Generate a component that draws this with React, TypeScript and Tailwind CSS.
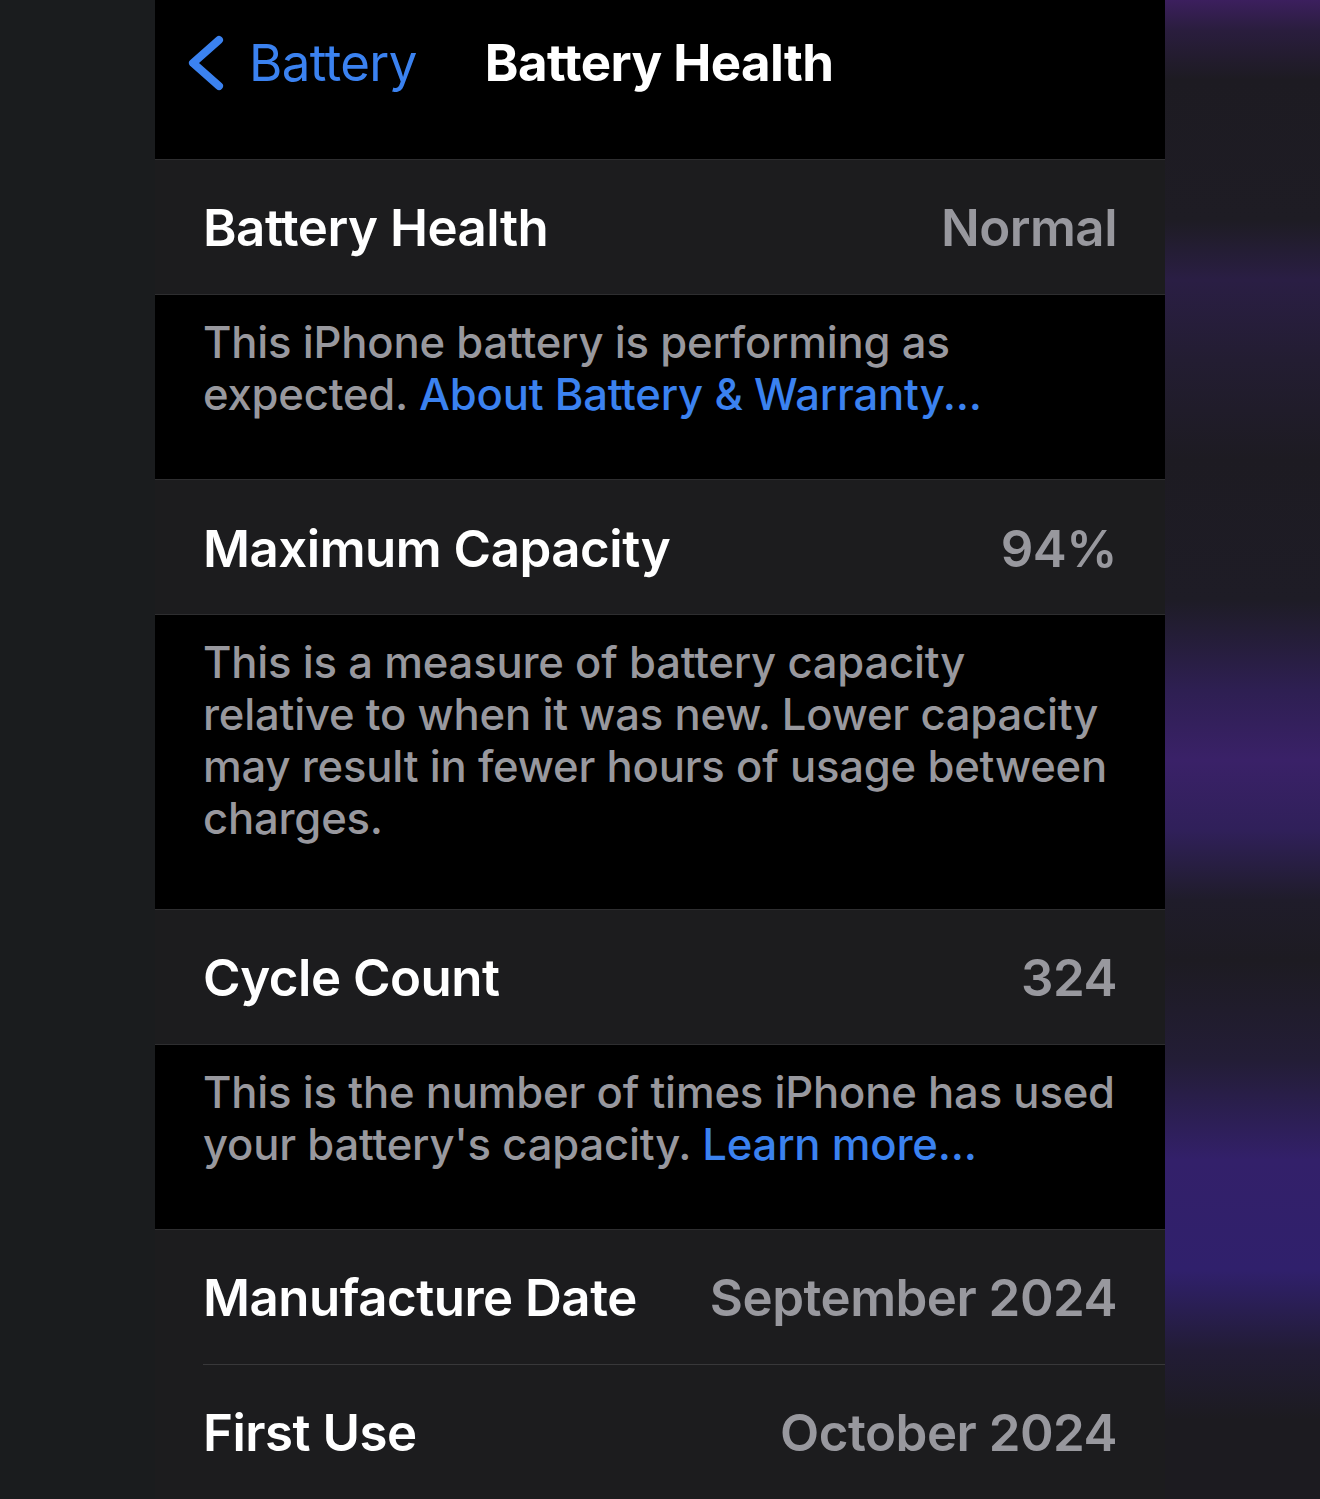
import React from 'react';

const font = { fontFamily: 'Inter, "Noto Sans", sans-serif' };

function ValueRow({ label, value, inset }: { label: string; value: string; inset?: boolean }) {
  return (
    <div className="bg-[#1c1c1e]">
      <div className="flex h-[134px] items-center justify-between px-[48px] pt-[3px]">
        <span className="text-[51px] font-semibold tracking-[-0.5px] text-white">{label}</span>
        <span className="text-[51px] font-semibold tracking-[-0.5px] text-[#98989e]">{value}</span>
      </div>
      {inset && <div className="ml-[48px] h-px bg-[#38383a]" />}
    </div>
  );
}

function Footer({ children, height }: { children: React.ReactNode; height: string }) {
  return (
    <div className={`border-y border-[#2e2e30] bg-black px-[48px] pt-[22px] ${height}`}>
      <p className="whitespace-nowrap text-[43.6px] font-medium leading-[52px] tracking-[-0.2px] text-[#98989e]">
        {children}
      </p>
    </div>
  );
}

export default function App() {
  return (
    <div className="flex h-[1499px] w-full overflow-hidden" style={font}>
      {/* left backdrop */}
      <div className="w-[155px] shrink-0 bg-[#1a1c1e]" />

      {/* phone screen */}
      <div className="flex w-[1010px] shrink-0 flex-col bg-black">
        {/* nav */}
        <div className="flex h-[160px] shrink-0 items-start border-b border-[#2e2e30] pt-[25px]">
          <div className="flex items-center pl-[30px]">
            <svg width="42" height="62" viewBox="0 0 42 62" fill="none">
              <path d="M34 8 L8 31 L34 54" stroke="#3b82f0" strokeWidth="8" strokeLinecap="round" strokeLinejoin="round" />
            </svg>
            <span className="ml-[22px] text-[51px] font-normal tracking-[-0.6px] text-[#3b82f0]">Battery</span>
          </div>
          <span className="ml-[68px] text-[51px] font-bold tracking-[-0.6px] text-white">Battery Health</span>
        </div>

        <ValueRow label="Battery Health" value="Normal" />
        <Footer height="h-[187px]">
          This iPhone battery is performing as
          <br />
          expected. <span className="text-[#3b82f0]">About Battery &amp; Warranty...</span>
        </Footer>
        <ValueRow label="Maximum Capacity" value="94%" />
        <Footer height="h-[296px]">
          This is a measure of battery capacity
          <br />
          relative to when it was new. Lower capacity
          <br />
          may result in fewer hours of usage between
          <br />
          charges.
        </Footer>
        <ValueRow label="Cycle Count" value="324" />
        <Footer height="h-[187px]">
          This is the number of times iPhone has used
          <br />
          your battery's capacity. <span className="text-[#3b82f0]">Learn more...</span>
        </Footer>
        <ValueRow label="Manufacture Date" value="September 2024" inset />
        <ValueRow label="First Use" value="October 2024" />
      </div>

      {/* right backdrop */}
      <div className="flex-1 bg-[linear-gradient(180deg,#3c1f5e_0px,#2a1d3e_30px,#1d1b22_80px,#1e1c24_220px,#2a1e44_280px,#231d32_360px,#1d1b22_460px,#1e1c26_600px,#2e1f52_690px,#3a2168_760px,#30205a_830px,#1f1c2a_900px,#1d1b22_960px,#231d36_1060px,#33206a_1160px,#30206c_1270px,#221c36_1350px,#1c1b20_1420px,#1c1b20_1499px)]" />
    </div>
  );
}
